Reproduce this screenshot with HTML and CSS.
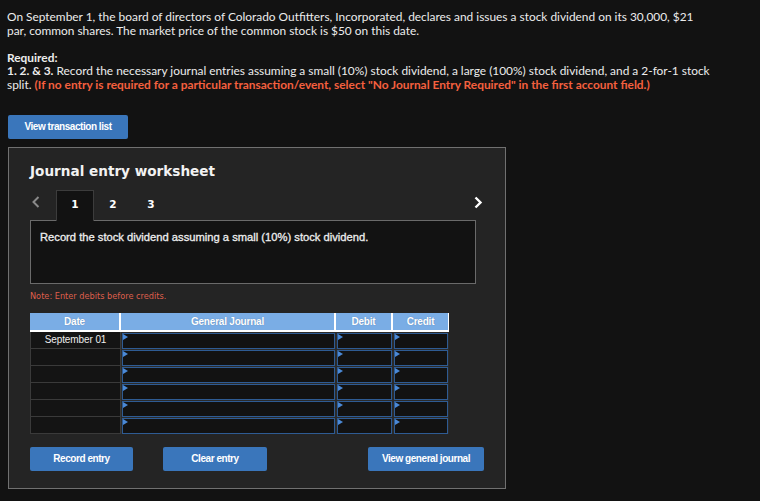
FILE: index.html
```html
<!DOCTYPE html>
<html lang="en">
<head>
<meta charset="utf-8">
<title>Journal entry worksheet</title>
<link rel="stylesheet" href="styles.css">
</head>
<body>
<div class="page">
  <div class="question">
    <p>On September 1, the board of directors of Colorado Outfitters, Incorporated, declares and issues a stock dividend on its 30,000, $21<br>par, common shares. The market price of the common stock is $50 on this date.</p>
    <p><strong>Required:</strong><br><strong>1. 2. &amp; 3.</strong> Record the necessary journal entries assuming a small (10%) stock dividend, a large (100%) stock dividend, and a 2-for-1 stock<br>split. <strong class="warn">(If no entry is required for a particular transaction/event, select "No Journal Entry Required" in the first account field.)</strong></p>
  </div>
  <button class="btn btn-list" type="button">View transaction list</button>
  <section class="panel">
    <h2 class="panel-title">Journal entry worksheet</h2>
    <div class="tabs">
      <span class="nav prev"><svg width="8" height="12" viewBox="0 0 8 12"><polyline points="6.5,1 1.5,6 6.5,11" fill="none" stroke="#8a8a8a" stroke-width="2"/></svg></span>
      <span class="tab active">1</span>
      <span class="tab">2</span>
      <span class="tab">3</span>
      <span class="nav next"><svg width="9" height="13" viewBox="0 0 9 13"><polyline points="1.5,1.5 6.5,6.5 1.5,11.5" fill="none" stroke="#ffffff" stroke-width="2.4"/></svg></span>
    </div>
    <div class="instruction">Record the stock dividend assuming a small (10%) stock dividend.</div>
    <p class="note">Note: Enter debits before credits.</p>
    <div class="journal" role="table">
      <div class="th" role="columnheader">Date</div>
      <div class="th" role="columnheader">General Journal</div>
      <div class="th" role="columnheader">Debit</div>
      <div class="th last" role="columnheader">Credit</div>

      <div class="dcell" role="cell">September 01</div>
      <div class="in" role="cell"><div class="field"></div></div>
      <div class="in" role="cell"><div class="field"></div></div>
      <div class="in" role="cell"><div class="field"></div></div>

      <div class="dcell" role="cell"></div>
      <div class="in" role="cell"><div class="field"></div></div>
      <div class="in" role="cell"><div class="field"></div></div>
      <div class="in" role="cell"><div class="field"></div></div>

      <div class="dcell" role="cell"></div>
      <div class="in" role="cell"><div class="field"></div></div>
      <div class="in" role="cell"><div class="field"></div></div>
      <div class="in" role="cell"><div class="field"></div></div>

      <div class="dcell" role="cell"></div>
      <div class="in" role="cell"><div class="field"></div></div>
      <div class="in" role="cell"><div class="field"></div></div>
      <div class="in" role="cell"><div class="field"></div></div>

      <div class="dcell" role="cell"></div>
      <div class="in" role="cell"><div class="field"></div></div>
      <div class="in" role="cell"><div class="field"></div></div>
      <div class="in" role="cell"><div class="field"></div></div>

      <div class="dcell" role="cell"></div>
      <div class="in" role="cell"><div class="field"></div></div>
      <div class="in" role="cell"><div class="field"></div></div>
      <div class="in" role="cell"><div class="field"></div></div>
    </div>
    <div class="actions">
      <button class="btn btn-record" type="button">Record entry</button>
      <button class="btn btn-clear" type="button">Clear entry</button>
      <button class="btn btn-view" type="button">View general journal</button>
    </div>
  </section>
</div>
</body>
</html>
```

FILE: styles.css
```css
html, body {
  margin: 0;
  background: #121212;
}
body {
  color: #ececec;
  font-family: "Liberation Sans", Arial, sans-serif;
}
.page {
  padding: 10px 0 0 7px;
}
.question p {
  margin: 0 0 13.5px;
  font-family: Lato, "Liberation Sans", sans-serif;
  font-size: 11.9px;
  line-height: 13.5px;
  white-space: nowrap;
}
.question p:last-child {
  margin-bottom: 0;
}
.question strong {
  font-weight: 700;
}
.question .warn {
  color: #f5603f;
}
.btn {
  display: block;
  border: 0;
  border-radius: 2px;
  background: #3a76bb;
  color: #ffffff;
  font-family: "Liberation Sans", Arial, sans-serif;
  font-weight: 700;
  font-size: 10px;
  letter-spacing: -0.45px;
  height: 24px;
  padding: 0;
  cursor: pointer;
}
.btn-list {
  margin: 23.5px 0 0 1px;
  width: 120px;
}
.panel {
  box-sizing: border-box;
  margin: 8px 0 0 1px;
  width: 498px;
  height: 342px;
  border: 1px solid #707070;
  background: #242424;
  padding: 0 29px 0 21px;
}
.panel-title {
  margin: 15px 0 0;
  font-family: "DejaVu Sans", Verdana, sans-serif;
  font-weight: 700;
  font-size: 13.6px;
  line-height: 16px;
  color: #f2f2f2;
}
.tabs {
  display: flex;
  height: 30px;
  margin-top: 11px;
  position: relative;
}
.nav {
  display: flex;
  align-items: flex-start;
  padding-top: 6px;
}
.nav.prev {
  width: 26px;
  padding-left: 2px;
  box-sizing: border-box;
}
.nav.next {
  margin-left: auto;
  margin-right: -8px;
  width: 10px;
}
.tab {
  box-sizing: border-box;
  width: 38px;
  text-align: center;
  font-family: "DejaVu Sans", Verdana, sans-serif;
  font-weight: 700;
  font-size: 10.5px;
  line-height: 12px;
  padding-top: 7px;
  color: #ffffff;
  border: 1px solid transparent;
  border-bottom: 0;
}
.tab.active {
  background: #121212;
  border-color: #3c3c3c;
  position: relative;
  z-index: 1;
  margin-bottom: -1px;
  height: 31px;
}
.instruction {
  box-sizing: border-box;
  height: 64px;
  border: 1px solid #6a6a6a;
  background: #121212;
  padding: 10px 9px;
  font-family: "Liberation Sans", Arial, sans-serif;
  font-size: 11.2px;
  line-height: 13px;
  color: #eeeeee;
  -webkit-text-stroke: 0.3px #eeeeee;
}
.note {
  margin: 7px 0 0;
  font-family: "DejaVu Sans", Verdana, sans-serif;
  font-size: 8.2px;
  line-height: 10px;
  color: #de5f4c;
}
.journal {
  display: grid;
  grid-template-columns: 91px 215px 57px 56px;
  grid-template-rows: 19px repeat(6, 17px);
  width: 419px;
  margin-top: 12px;
  background: #2b2b2b;
}
.th {
  box-sizing: border-box;
  background: #7aade5;
  color: #ffffff;
  font-family: "Liberation Sans", Arial, sans-serif;
  font-weight: 700;
  font-size: 10px;
  line-height: 17px;
  letter-spacing: -0.2px;
  text-align: center;
  border-right: 2px solid #ffffff;
  border-bottom: 2px solid #ffffff;
  text-shadow: 0 0 1px rgba(60, 90, 130, 0.6);
}
.th.last {
  border-right: 1px solid #ffffff;
}
.dcell {
  box-sizing: border-box;
  background: #141414;
  border-left: 1px solid #3a3a3a;
  border-right: 1px solid #3a3a3a;
  border-bottom: 1px solid #3a3a3a;
  line-height: 16px;
  text-align: center;
  font-size: 10px;
  color: #eeeeee;
  letter-spacing: -0.1px;
}
.in {
  background: #2b2b2b;
}
.field {
  position: relative;
  box-sizing: border-box;
  height: 16px;
  margin: 1px 1px 0 1px;
  border: 1px solid #2e5b93;
  background: #121212;
}
.field::before {
  content: "";
  position: absolute;
  top: 0;
  left: 0;
  width: 0;
  height: 0;
  border-left: 5px solid #4b89d6;
  border-top: 3px solid transparent;
  border-bottom: 3px solid transparent;
}
.actions {
  display: flex;
  width: 454px;
  margin-top: 13px;
}
.btn-record {
  width: 103px;
}
.btn-clear {
  width: 104px;
  margin-left: 30px;
}
.btn-view {
  width: 116px;
  margin-left: auto;
}
```
